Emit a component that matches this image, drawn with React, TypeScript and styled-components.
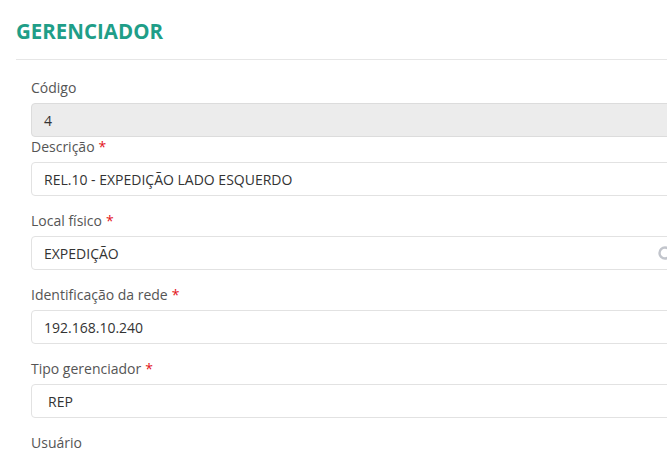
import React from "react";
import styled, { createGlobalStyle } from "styled-components";

const GlobalStyle = createGlobalStyle`
  body {
    margin: 0;
    background: #fff;
    font-family: "Open Sans", "Liberation Sans", sans-serif;
    overflow: hidden;
  }
`;

const Page = styled.div`
  width: 684px;
  margin-left: 16px;
`;

const Header = styled.div`
  padding-top: 17px;
  padding-bottom: 14px;
  border-bottom: 1px solid #e6e6e6;
`;

const Title = styled.h1`
  margin: 0;
  font-size: 20.5px;
  line-height: 28px;
  font-weight: 700;
  color: #1f9e88;
`;

const Form = styled.div`
  padding: 18px 0 0 15px;
`;

const Field = styled.div<{ $tight?: boolean }>`
  margin-bottom: ${(p) => (p.$tight ? "0" : "15px")};
`;

const Label = styled.div`
  font-size: 14px;
  line-height: 20px;
  color: #555;
  margin-bottom: 5px;
`;

const Required = styled.span`
  color: #e3131b;
  margin-left: 4px;
`;

const Input = styled.div<{ $disabled?: boolean; $pad?: number }>`
  box-sizing: border-box;
  height: 34px;
  display: flex;
  align-items: center;
  padding: 0 27px 0 ${(p) => p.$pad ?? 12}px;
  border: 1px solid ${(p) => (p.$disabled ? "#dcdcdc" : "#e2e2e2")};
  border-radius: 4px;
  background: ${(p) => (p.$disabled ? "#ececec" : "#fff")};
  font-size: 14px;
  color: #333;
`;

const Value = styled.span`
  flex: 1;
`;

const Spinner = () => (
  <svg width="14" height="14" viewBox="0 0 14 14">
    <circle cx="7" cy="7" r="5.5" fill="none" stroke="#c2c5cc" strokeWidth="2.4" />
  </svg>
);

type FieldDef = {
  label: string;
  value: string;
  required?: boolean;
  disabled?: boolean;
  pad?: number;
  icon?: boolean;
};

const fields: FieldDef[] = [
  { label: "Código", value: "4", disabled: true },
  { label: "Descrição", value: "REL.10 - EXPEDIÇÃO LADO ESQUERDO", required: true },
  { label: "Local físico", value: "EXPEDIÇÃO", required: true, icon: true },
  { label: "Identificação da rede", value: "192.168.10.240", required: true },
  { label: "Tipo gerenciador", value: "REP", required: true, pad: 16 },
];

export default function App() {
  return (
    <>
      <GlobalStyle />
      <Page>
        <Header>
          <Title>GERENCIADOR</Title>
        </Header>
        <Form>
          {fields.map((f, i) => (
            <Field key={f.label} $tight={i === 0}>
              <Label>
                {f.label}
                {f.required && <Required>*</Required>}
              </Label>
              <Input $disabled={f.disabled} $pad={f.pad}>
                <Value>{f.value}</Value>
                {f.icon && <Spinner />}
              </Input>
            </Field>
          ))}
          <Field>
            <Label>Usuário</Label>
          </Field>
        </Form>
      </Page>
    </>
  );
}
